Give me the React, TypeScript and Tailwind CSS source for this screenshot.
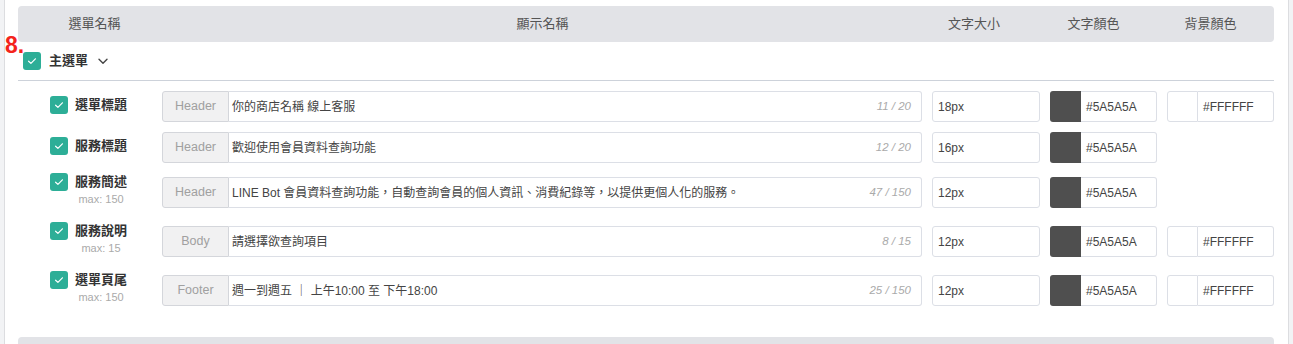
import { Fragment } from 'react';

const rows = [
    {
        label: '選單標題',
        max: '',
        tag: 'Header',
        text: '你的商店名稱 線上客服',
        count: '11 / 20',
        size: '18px',
        color: '#5A5A5A',
        bg: '#FFFFFF',
        space: 'mt-0',
    },
    {
        label: '服務標題',
        max: '',
        tag: 'Header',
        text: '歡迎使用會員資料查詢功能',
        count: '12 / 20',
        size: '16px',
        color: '#5A5A5A',
        bg: '',
        space: 'mt-[10px]',
    },
    {
        label: '服務簡述',
        max: 'max: 150',
        tag: 'Header',
        text: 'LINE Bot 會員資料查詢功能，自動查詢會員的個人資訊、消費紀錄等，以提供更個人化的服務。',
        count: '47 / 150',
        size: '12px',
        color: '#5A5A5A',
        bg: '',
        space: 'mt-[14px]',
    },
    {
        label: '服務說明',
        max: 'max: 15',
        tag: 'Body',
        text: '請選擇欲查詢項目',
        count: '8 / 15',
        size: '12px',
        color: '#5A5A5A',
        bg: '#FFFFFF',
        space: 'mt-[18px]',
    },
    {
        label: '選單頁尾',
        max: 'max: 150',
        tag: 'Footer',
        text: '週一到週五 ｜ 上午10:00 至 下午18:00',
        count: '25 / 150',
        size: '12px',
        color: '#5A5A5A',
        bg: '#FFFFFF',
        space: 'mt-[18px]',
    },
];

function Checkbox({ className = '' }: { className?: string }) {
    return (
        <span
            className={`flex h-[18px] w-[18px] shrink-0 items-center justify-center rounded-[3px] bg-[#2dae97] ${className}`}
        >
            <svg width="12" height="12" viewBox="0 0 12 12" fill="none">
                <path
                    d="M2.6 6.2 L4.9 8.4 L9.4 3.8"
                    stroke="white"
                    strokeWidth="1.2"
                    strokeLinecap="round"
                    strokeLinejoin="round"
                />
            </svg>
        </span>
    );
}

export default function App() {
    return (
        <div className="min-h-screen bg-[#f2f3f5] font-['Liberation_Sans','Noto_Sans_CJK_TC',sans-serif]">
            <div className="mx-[4px] min-h-screen border-x border-[#dcdde0] bg-white pr-[14px] pl-[13px] pt-[6px]">
                {/* column titles */}
                <div className="flex h-[36px] items-center rounded-[4px] bg-[#e2e3e7] text-[13px] text-[#555]">
                    <div className="w-[153px] text-center">選單名稱</div>
                    <div className="w-[743px] text-center">顯示名稱</div>
                    <div className="w-[120px] text-center">文字大小</div>
                    <div className="w-[119px] text-center">文字顏色</div>
                    <div className="w-[115px] text-center">背景顏色</div>
                </div>

                {/* group toggle */}
                <div className="relative flex h-[39px] items-center border-b border-[#cdd2da] pl-[5px]">
                    <span className="absolute -left-[13px] -top-[8px] text-[23px] leading-none font-bold text-[#f4241c]">
                        8.
                    </span>
                    <Checkbox />
                    <span className="ml-[8px] text-[13px] leading-[20px] font-bold text-[#333]">
                        主選單
                    </span>
                    <svg className="ml-[10px]" width="10" height="7" viewBox="0 0 10 7" fill="none">
                        <path
                            d="M1 1.2 L5 5.2 L9 1.2"
                            stroke="#444"
                            strokeWidth="1.4"
                            strokeLinecap="round"
                            strokeLinejoin="round"
                        />
                    </svg>
                </div>

                <div className="flex flex-col pt-[10px] pb-[31px]">
                    {rows.map((row) => (
                        <div key={row.label} className={`flex h-[31px] items-center ${row.space}`}>
                            <div
                                className={`flex w-[144px] shrink-0 items-start pl-[32px] ${row.max ? '-mt-[7px]' : '-mt-[4px]'}`}
                            >
                                <Checkbox className="mt-[1px]" />
                                <div className="ml-[7px] flex flex-col items-center">
                                    <span className="text-[13px] leading-[20px] font-bold text-[#333]">
                                        {row.label}
                                    </span>
                                    {row.max && (
                                        <span className="text-[11px] leading-[14px] text-[#aaa]">
                                            {row.max}
                                        </span>
                                    )}
                                </div>
                            </div>

                            <div className="flex h-full w-[760px] shrink-0">
                                <div className="flex w-[67px] items-center justify-center rounded-l-[3px] border border-[#d4d6db] bg-[#f1f1f2] text-[12.5px] text-[#a0a0a0]">
                                    {row.tag}
                                </div>
                                <div className="flex flex-1 items-center justify-between rounded-r-[3px] border-y border-r border-[#dcdfe6] pr-[10px] pl-[3px] text-[12px] text-[#444]">
                                    <span className="whitespace-pre">{row.text}</span>
                                    <span className="text-[11.5px] text-[#aaa] italic">{row.count}</span>
                                </div>
                            </div>

                            <div className="ml-[10px] flex h-full w-[108px] shrink-0 items-center rounded-[3px] border border-[#dcdfe6] pl-[5px] text-[12px] text-[#444]">
                                {row.size}
                            </div>

                            <div className="ml-[10px] flex h-full w-[107px] shrink-0">
                                <div className="w-[31px] rounded-l-[3px] bg-[#4f4f4f]" />
                                <div className="flex flex-1 items-center rounded-r-[3px] border-y border-r border-[#dcdfe6] pl-[5px] text-[12px] text-[#444]">
                                    {row.color}
                                </div>
                            </div>

                            {row.bg ? (
                                <div className="ml-[10px] flex h-full w-[107px] shrink-0">
                                    <div className="w-[31px] rounded-l-[3px] border border-[#dcdfe6] bg-white" />
                                    <div className="flex flex-1 items-center rounded-r-[3px] border-y border-r border-[#dcdfe6] pl-[5px] text-[12px] text-[#444]">
                                        {row.bg}
                                    </div>
                                </div>
                            ) : (
                                <Fragment />
                            )}
                        </div>
                    ))}
                </div>

                {/* next group header, cut off by the window */}
                <div className="h-[36px] rounded-[4px] bg-[#e2e3e7]" />
            </div>
        </div>
    );
}
